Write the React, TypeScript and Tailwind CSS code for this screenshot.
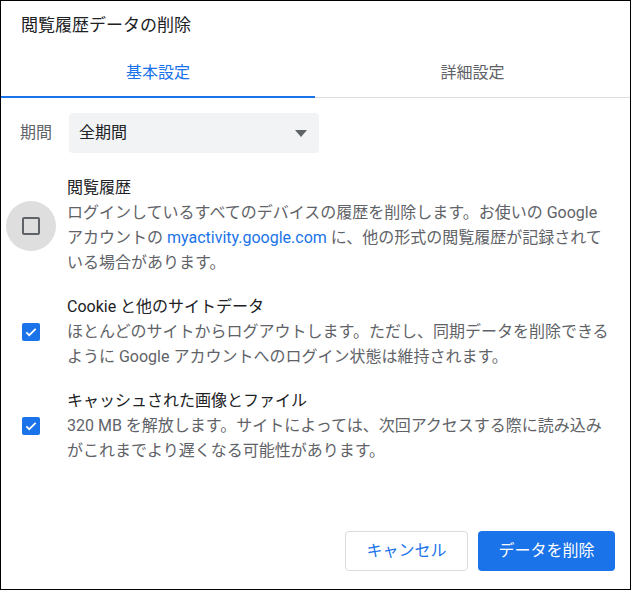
import React from "react";

const Check = ({ checked }: { checked: boolean }) =>
  checked ? (
    <div className="w-[18px] h-[18px] rounded-[2px] bg-[#1a73e8] flex items-center justify-center">
      <svg width="14" height="14" viewBox="0 0 24 24"><path d="M4 12.5l5 5L20 6.5" stroke="white" strokeWidth="3" fill="none" /></svg>
    </div>
  ) : (
    <div className="w-[18px] h-[18px] rounded-[2px] border-2 border-[#5f6368]" />
  );

function Row({ checked, halo, title, children }: { checked: boolean; halo?: boolean; title: string; children: React.ReactNode }) {
  return (
    <div className="flex">
      <div className="w-[66px] shrink-0 flex items-center pl-[5px]">
        <div className={"w-[50px] h-[50px] rounded-full flex items-center justify-center " + (halo ? "bg-[#dedede]" : "")}>
          <Check checked={checked} />
        </div>
      </div>
      <div className="pr-[14px]">
        <div className="text-[16px] leading-[24px] text-[#202124]">{title}</div>
        <div className="text-[16px] leading-[25px] text-[#5f6368]">{children}</div>
      </div>
    </div>
  );
}

export default function App() {
  return (
    <div className="w-[631px] h-[590px] border border-black bg-white flex flex-col" style={{ fontFamily: "Roboto, 'Noto Sans CJK JP', sans-serif" }}>
      <div className="px-[20px] pt-[12px] h-[50px] text-[17px] text-[#202124]">閲覧履歴データの削除</div>
      <div className="flex border-b border-[#dadce0] h-[47px]">
        <div className="w-[314px] flex items-center justify-center text-[16px] text-[#1a73e8] border-b-[2px] border-[#1a73e8] -mb-[1px] pb-[2px]">基本設定</div>
        <div className="flex-1 flex items-center justify-center text-[16px] text-[#5f6368] pb-[2px]">詳細設定</div>
      </div>
      <div className="flex items-center px-[19px] mt-[15px] gap-[17px]">
        <span className="text-[16px] text-[#5f6368]">期間</span>
        <div className="w-[250px] h-[40px] rounded-[4px] bg-[#f1f3f4] flex items-center justify-between pl-[10px] pr-[12px] text-[16px] text-[#202124]">
          全期間
          <svg width="12" height="7" viewBox="0 0 12 7"><path d="M0 0h12L6 7z" fill="#5f6368" /></svg>
        </div>
      </div>
      <div className="mt-[23px] flex flex-col gap-[20px]">
        <Row checked={false} halo title="閲覧履歴">
          ログインしているすべてのデバイスの履歴を削除します。お使いの Google アカウントの <span className="text-[#1a73e8]">myactivity.google.com</span> に、他の形式の閲覧履歴が記録されている場合があります。
        </Row>
        <Row checked title="Cookie と他のサイトデータ">
          ほとんどのサイトからログアウトします。ただし、同期データを削除できるように Google アカウントへのログイン状態は維持されます。
        </Row>
        <Row checked title="キャッシュされた画像とファイル">
          320 MB を解放します。サイトによっては、次回アクセスする際に読み込みがこれまでより遅くなる可能性があります。
        </Row>
      </div>
      <div className="mt-auto mb-[18px] flex justify-end gap-[10px] pr-[15px]">
        <button className="w-[123px] h-[40px] rounded-[4px] border border-[#dadce0] text-[16px] text-[#1a73e8] bg-white">キャンセル</button>
        <button className="w-[137px] h-[40px] rounded-[4px] bg-[#1a73e8] text-[16px] text-white">データを削除</button>
      </div>
    </div>
  );
}
